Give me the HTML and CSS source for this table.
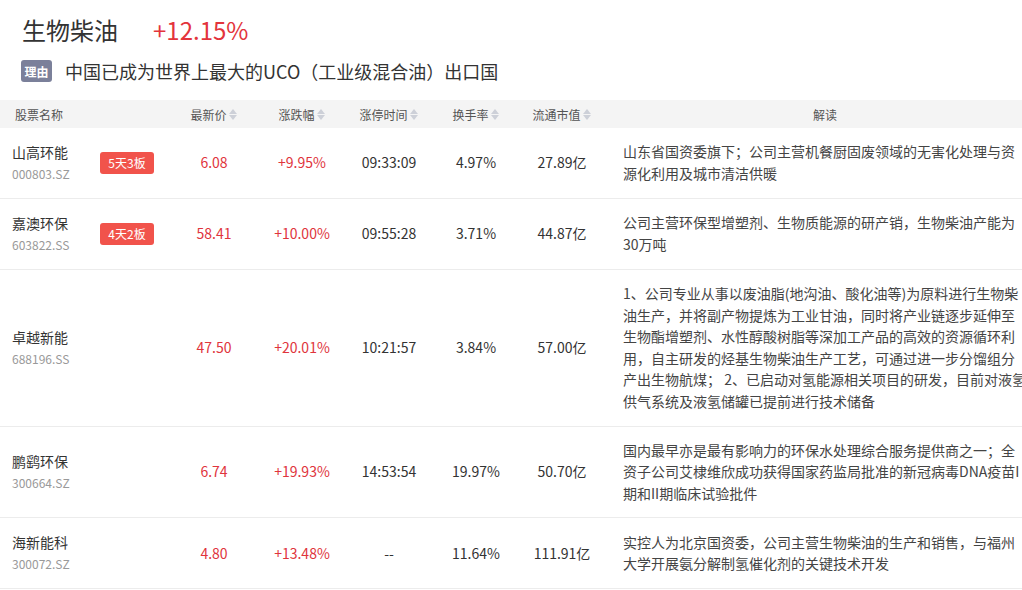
FILE: index.html
```html
<!DOCTYPE html>
<html lang="zh-CN">
<head>
<meta charset="utf-8">
<title>生物柴油</title>
<link rel="stylesheet" href="styles.css">
</head>
<body>
<div class="page">
  <div class="topic">
    <h1 class="topic-name">生物柴油</h1>
    <span class="topic-change">+12.15%</span>
  </div>
  <div class="reason">
    <span class="reason-tag">理由</span>
    <span class="reason-text">中国已成为世界上最大的UCO（工业级混合油）出口国</span>
  </div>

  <table class="stocks">
    <colgroup>
      <col class="c-name"><col class="c-price"><col class="c-chg"><col class="c-time"><col class="c-turn"><col class="c-cap"><col class="c-desc">
    </colgroup>
    <thead>
      <tr>
        <th class="th-name">股票名称</th>
        <th><span class="sortable">最新价<i class="sort"></i></span></th>
        <th><span class="sortable">涨跌幅<i class="sort"></i></span></th>
        <th><span class="sortable">涨停时间<i class="sort"></i></span></th>
        <th><span class="sortable">换手率<i class="sort"></i></span></th>
        <th><span class="sortable">流通市值<i class="sort"></i></span></th>
        <th>解读</th>
      </tr>
    </thead>
    <tbody>
      <tr>
        <td class="name-cell"><div class="name-wrap"><div class="stock"><div class="stock-name">山高环能</div><div class="stock-code">000803.SZ</div></div><span class="board">5天3板</span></div></td>
        <td class="num red">6.08</td>
        <td class="num red">+9.95%</td>
        <td class="num">09:33:09</td>
        <td class="num">4.97%</td>
        <td class="num">27.89亿</td>
        <td class="desc">山东省国资委旗下；公司主营机餐厨固废领域的无害化处理与资源化利用及城市清洁供暖</td>
      </tr>
      <tr>
        <td class="name-cell"><div class="name-wrap"><div class="stock"><div class="stock-name">嘉澳环保</div><div class="stock-code">603822.SS</div></div><span class="board">4天2板</span></div></td>
        <td class="num red">58.41</td>
        <td class="num red">+10.00%</td>
        <td class="num">09:55:28</td>
        <td class="num">3.71%</td>
        <td class="num">44.87亿</td>
        <td class="desc">公司主营环保型增塑剂、生物质能源的研产销，生物柴油产能为30万吨</td>
      </tr>
      <tr>
        <td class="name-cell"><div class="name-wrap"><div class="stock"><div class="stock-name">卓越新能</div><div class="stock-code">688196.SS</div></div></div></td>
        <td class="num red">47.50</td>
        <td class="num red">+20.01%</td>
        <td class="num">10:21:57</td>
        <td class="num">3.84%</td>
        <td class="num">57.00亿</td>
        <td class="desc">1、公司专业从事以废油脂(地沟油、酸化油等)为原料进行生物柴油生产，并将副产物提炼为工业甘油，同时将产业链逐步延伸至生物酯增塑剂、水性醇酸树脂等深加工产品的高效的资源循环利用，自主研发的烃基生物柴油生产工艺，可通过进一步分馏组分产出生物航煤； 2、已启动对氢能源相关项目的研发，目前对液氢供气系统及液氢储罐已提前进行技术储备</td>
      </tr>
      <tr>
        <td class="name-cell"><div class="name-wrap"><div class="stock"><div class="stock-name">鹏鹞环保</div><div class="stock-code">300664.SZ</div></div></div></td>
        <td class="num red">6.74</td>
        <td class="num red">+19.93%</td>
        <td class="num">14:53:54</td>
        <td class="num">19.97%</td>
        <td class="num">50.70亿</td>
        <td class="desc">国内最早亦是最有影响力的环保水处理综合服务提供商之一；全资子公司艾棣维欣成功获得国家药监局批准的新冠病毒DNA疫苗I期和II期临床试验批件</td>
      </tr>
      <tr>
        <td class="name-cell"><div class="name-wrap"><div class="stock"><div class="stock-name">海新能科</div><div class="stock-code">300072.SZ</div></div></div></td>
        <td class="num red">4.80</td>
        <td class="num red">+13.48%</td>
        <td class="num">--</td>
        <td class="num">11.64%</td>
        <td class="num">111.91亿</td>
        <td class="desc">实控人为北京国资委，公司主营生物柴油的生产和销售，与福州大学开展氨分解制氢催化剂的关键技术开发</td>
      </tr>
    </tbody>
  </table>
</div>
</body>
</html>
```

FILE: styles.css
```css
html, body {
  margin: 0;
  padding: 0;
  background: #ffffff;
  overflow: hidden;
}

body {
  font-family: "Noto Sans CJK SC", "Noto Sans", sans-serif;
  color: #333333;
}

.page {
  width: 1046px;
  padding-top: 14px;
}

.topic {
  display: flex;
  align-items: center;
  height: 32px;
  padding-left: 22px;
}

.topic-name {
  margin: 0;
  font-size: 24px;
  font-weight: 400;
  line-height: 32px;
  color: #333333;
}

.topic-change {
  margin-left: 35px;
  font-size: 24px;
  line-height: 32px;
  color: #e3343c;
}

.reason {
  display: flex;
  align-items: center;
  margin-top: 13px;
  height: 24px;
  padding-left: 21px;
}

.reason-tag {
  display: inline-flex;
  align-items: center;
  justify-content: center;
  width: 31px;
  height: 22px;
  border-radius: 3px;
  background: #7b809a;
  color: #ffffff;
  font-size: 12px;
  font-weight: 700;
}

.reason-text {
  margin-left: 13px;
  font-size: 18px;
  line-height: 24px;
  color: #333333;
}

.stocks {
  margin-top: 17px;
  width: 1046px;
  table-layout: fixed;
  border-collapse: collapse;
}

.c-name { width: 170px; }
.c-price { width: 88px; }
.c-chg { width: 88px; }
.c-time { width: 86px; }
.c-turn { width: 88px; }
.c-cap { width: 84px; }
.c-desc { width: 442px; }

.stocks thead tr {
  background: #f4f4f4;
}

.stocks th {
  height: 28px;
  padding: 0;
  font-size: 12px;
  font-weight: 400;
  color: #555555;
  text-align: center;
  vertical-align: middle;
}

.stocks th.th-name {
  text-align: left;
  padding-left: 15px;
}

.sortable {
  display: inline-flex;
  align-items: center;
}

.sort {
  display: inline-flex;
  flex-direction: column;
  align-items: center;
  margin-left: 2px;
  width: 9px;
  height: 11px;
}

.sort::before,
.sort::after {
  content: "";
  display: block;
  width: 0;
  height: 0;
  border-left: 4.5px solid transparent;
  border-right: 4.5px solid transparent;
}

.sort::before {
  border-bottom: 5px solid #cdd0d8;
  margin-bottom: 1px;
}

.sort::after {
  border-top: 5px solid #cdd0d8;
}

.stocks td {
  padding: 13px 0;
  border-bottom: 1px solid #ececec;
  vertical-align: middle;
  font-size: 14px;
  line-height: 21.6px;
}

.name-wrap {
  display: flex;
  align-items: center;
}

.stock {
  width: 100px;
  padding-left: 12px;
  box-sizing: border-box;
}

.stock-name {
  font-size: 14px;
  line-height: 22px;
  color: #333333;
}

.stock-code {
  font-size: 12px;
  line-height: 22px;
  color: #999999;
}

.board {
  display: inline-flex;
  align-items: center;
  justify-content: center;
  width: 54px;
  height: 22px;
  border-radius: 3px;
  background: #f1534b;
  color: #ffffff;
  font-size: 12px;
}

.num {
  text-align: center;
  color: #333333;
}

.num.red {
  color: #e0343c;
}

.stocks td.desc {
  padding-left: 19px;
  padding-right: 19px;
  color: #444444;
  text-align: left;
}
```
